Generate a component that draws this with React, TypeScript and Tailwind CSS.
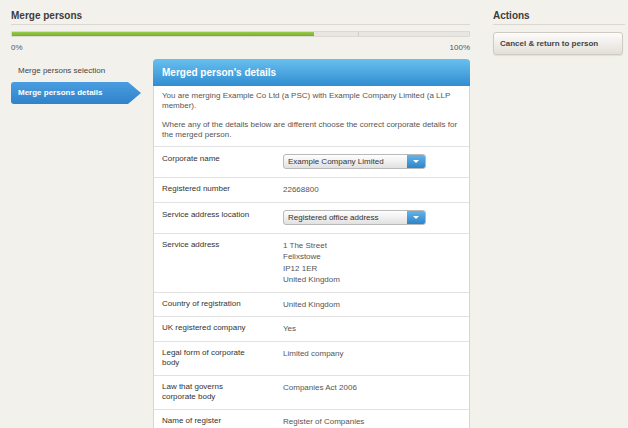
import React from "react";

const rows: { label: string; value?: string[]; select?: string }[] = [
  { label: "Corporate name", select: "Example Company Limited" },
  { label: "Registered number", value: ["22668800"] },
  { label: "Service address location", select: "Registered office address" },
  {
    label: "Service address",
    value: ["1 The Street", "Felixstowe", "IP12 1ER", "United Kingdom"],
  },
  { label: "Country of registration", value: ["United Kingdom"] },
  { label: "UK registered company", value: ["Yes"] },
  { label: "Legal form of corporate body", value: ["Limited company"] },
  { label: "Law that governs corporate body", value: ["Companies Act 2006"] },
  { label: "Name of register", value: ["Register of Companies"] },
];

const Select = ({ text }: { text: string }) => (
  <div className="flex h-[15px] w-[143px] rounded-[3px] border border-[#b9b9b9] bg-linear-to-b from-[#ffffff] to-[#e1e1e1]">
    <span className="flex-1 pl-[4px] leading-[13px] text-[#333]">{text}</span>
    <span className="flex w-[18px] items-center justify-center rounded-r-[2px] bg-linear-to-b from-[#63b4e8] to-[#2d84c9]">
      <span className="h-0 w-0 border-x-[3px] border-t-[3px] border-x-transparent border-t-white" />
    </span>
  </div>
);

const SectionTitle = ({ children }: { children: React.ReactNode }) => (
  <h1 className="border-b border-[#dbd8d1] pt-[9px] pb-[2px] text-[10px] font-bold leading-[13px] text-[#3c3c3c]">
    {children}
  </h1>
);

export default function App() {
  return (
    <div className="min-h-screen bg-[#f3f1ec] font-['Liberation_Sans',Arial,sans-serif] text-[8px] text-[#444]">
      <div className="flex gap-[23px] pl-[11px]">
        <main className="w-[459px]">
          <SectionTitle>Merge persons</SectionTitle>

          {/* progress */}
          <div className="mt-[6px] flex h-[6px] overflow-hidden rounded-[1px] border border-[#dcd9d3] bg-[#e8e6e2]">
            <div className="w-[302px] bg-linear-to-b from-[#9acb4a] to-[#76ad2e]" />
            <div className="w-[44px]" />
            <div className="w-px bg-[#cfccc6]" />
          </div>
          <div className="mt-[6px] flex justify-between leading-[10px] text-[#555]">
            <span>0%</span>
            <span>100%</span>
          </div>

          <div className="mt-[6px] flex">
            <nav className="w-[142px]">
              <div className="pt-[7px] pb-[6px] pl-[7px] leading-[10px] text-[#444]">
                Merge persons selection
              </div>
              <div className="h-[22px] w-[130px] rounded-l-[3px] bg-linear-to-b from-[#4a9de0] to-[#2f83c9] pl-[7px] font-bold leading-[22px] text-white [clip-path:polygon(0_0,calc(100%-13px)_0,100%_50%,calc(100%-13px)_100%,0_100%)]">
                Merge persons details
              </div>
            </nav>

            <section className="w-[317px] rounded-t-[4px] border-x border-[#d6d6d6] bg-white">
              <div className="-mx-px h-[27px] rounded-t-[4px] bg-linear-to-b from-[#67c0ee] to-[#318dd1] pl-[9px] text-[10px] font-bold leading-[27px] text-white">
                Merged person&apos;s details
              </div>
              <div className="px-[8px] pt-[5px] pb-[6px] leading-[10px] text-[#555]">
                <p>
                  You are merging Example Co Ltd (a PSC) with Example Company Limited (a LLP
                  member).
                </p>
                <p className="mt-[9px]">
                  Where any of the details below are different choose the correct corporate
                  details for the merged person.
                </p>
              </div>

              {rows.map((r) => (
                <div
                  key={r.label}
                  className={`flex border-t border-[#e2e2e2] pl-[8px] ${
                    r.select ? "pt-[7px] pb-[8px]" : "pt-[6px] pb-[6px]"
                  }`}
                >
                  <div className="w-[121px] pr-[29px] leading-[10.5px] text-[#333]">{r.label}</div>
                  <div className="leading-[11.5px] text-[#555]">
                    {r.select ? (
                      <Select text={r.select} />
                    ) : (
                      r.value?.map((v) => <div key={v}>{v}</div>)
                    )}
                  </div>
                </div>
              ))}
            </section>
          </div>
        </main>

        <aside className="w-[132px]">
          <SectionTitle>Actions</SectionTitle>
          <button className="mt-[7px] h-[23px] w-[130px] rounded-[3px] border border-[#d0ccc4] bg-linear-to-b from-[#fdfcfb] to-[#e3e0d9] pl-[6px] text-left font-bold leading-[21px] text-[#444] shadow-[0_1px_1px_rgba(0,0,0,0.08)]">
            Cancel &amp; return to person
          </button>
        </aside>
      </div>
    </div>
  );
}
